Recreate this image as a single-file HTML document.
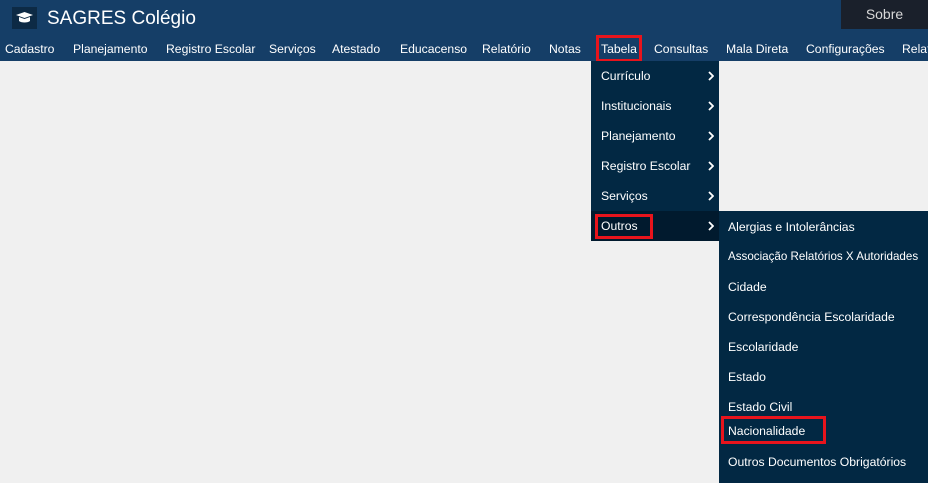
<!DOCTYPE html><html><head><style>
body{margin:0;width:928px;height:483px;background:#f0f0f0;font-family:"Liberation Sans",sans-serif;position:relative;overflow:hidden}
.a{position:absolute;white-space:nowrap}
#top{position:absolute;left:0;top:0;width:928px;height:61px;background:#153e67}
.n{position:absolute;top:42px;color:#fff;font-size:12.2px;white-space:nowrap}
.dd{position:absolute;background:#022843}
.it{position:absolute;left:10px;color:#fff;font-size:12.2px;white-space:nowrap}
.ar{position:absolute;right:5px}
.rb{position:absolute;border:3px solid #e8141c;box-sizing:border-box}
</style></head><body>
<div id="top"></div>
<div class="a" style="left:12px;top:7px;width:25px;height:22px;background:#0d2a45"></div>
<svg class="a" style="left:15px;top:11px" width="19" height="14" viewBox="0 0 19 14"><path d="M1 4L9.5 1 18 4 9.5 7Z" fill="#fff"/><path d="M4 6v4c2 2 9 2 11 0V6L9.5 8Z" fill="#fff"/></svg>
<div class="a" style="left:47px;top:8px;color:#fff;font-size:19px">SAGRES Colégio</div>
<div class="a" style="left:841px;top:0;width:87px;height:29px;background:#1a202b;color:#d8d8d8;font-size:14px;text-align:center;line-height:29px">Sobre</div>
<div class="n" style="left:5px">Cadastro</div>
<div class="n" style="left:73px">Planejamento</div>
<div class="n" style="left:166px">Registro Escolar</div>
<div class="n" style="left:269px">Serviços</div>
<div class="n" style="left:332px">Atestado</div>
<div class="n" style="left:400px">Educacenso</div>
<div class="n" style="left:482px">Relatório</div>
<div class="n" style="left:549px">Notas</div>
<div class="n" style="left:601px">Tabela</div>
<div class="n" style="left:654px">Consultas</div>
<div class="n" style="left:726px">Mala Direta</div>
<div class="n" style="left:806px">Configurações</div>
<div class="n" style="left:902px">Relatórios</div>
<div class="rb" style="left:596px;top:35px;width:46px;height:27px"></div>
<div class="dd" style="left:591px;top:61px;width:128px;height:180px">
<div style="position:absolute;left:0;top:150px;width:128px;height:30px;background:#011a2e"></div>
<div class="it" style="top:8px">Currículo</div>
<div class="it" style="top:38px">Institucionais</div>
<div class="it" style="top:68px">Planejamento</div>
<div class="it" style="top:98px">Registro Escolar</div>
<div class="it" style="top:128px">Serviços</div>
<div class="it" style="top:158px">Outros</div>
<svg class="ar" style="top:10px" width="6" height="10"><path d="M1 1l4 4-4 4" stroke="#fff" stroke-width="1.8" fill="none"/></svg>
<svg class="ar" style="top:40px" width="6" height="10"><path d="M1 1l4 4-4 4" stroke="#fff" stroke-width="1.8" fill="none"/></svg>
<svg class="ar" style="top:70px" width="6" height="10"><path d="M1 1l4 4-4 4" stroke="#fff" stroke-width="1.8" fill="none"/></svg>
<svg class="ar" style="top:100px" width="6" height="10"><path d="M1 1l4 4-4 4" stroke="#fff" stroke-width="1.8" fill="none"/></svg>
<svg class="ar" style="top:130px" width="6" height="10"><path d="M1 1l4 4-4 4" stroke="#fff" stroke-width="1.8" fill="none"/></svg>
<svg class="ar" style="top:160px" width="6" height="10"><path d="M1 1l4 4-4 4" stroke="#fff" stroke-width="1.8" fill="none"/></svg>
</div>
<div class="rb" style="left:595px;top:214px;width:58px;height:25px"></div>
<div class="dd" style="left:719px;top:211px;width:209px;height:272px">
<div class="it" style="left:9px;top:9px">Alergias e Intolerâncias</div>
<div class="it" style="left:9px;top:39px;font-size:11.6px">Associação Relatórios X Autoridades</div>
<div class="it" style="left:9px;top:69px">Cidade</div>
<div class="it" style="left:9px;top:99px">Correspondência Escolaridade</div>
<div class="it" style="left:9px;top:129px">Escolaridade</div>
<div class="it" style="left:9px;top:159px">Estado</div>
<div class="it" style="left:9px;top:189px">Estado Civil</div>
<div class="it" style="left:9px;top:213px">Nacionalidade</div>
<div class="it" style="left:9px;top:244px">Outros Documentos Obrigatórios</div>
</div>
<div class="rb" style="left:721px;top:416px;width:105px;height:28px"></div>
</body></html>
